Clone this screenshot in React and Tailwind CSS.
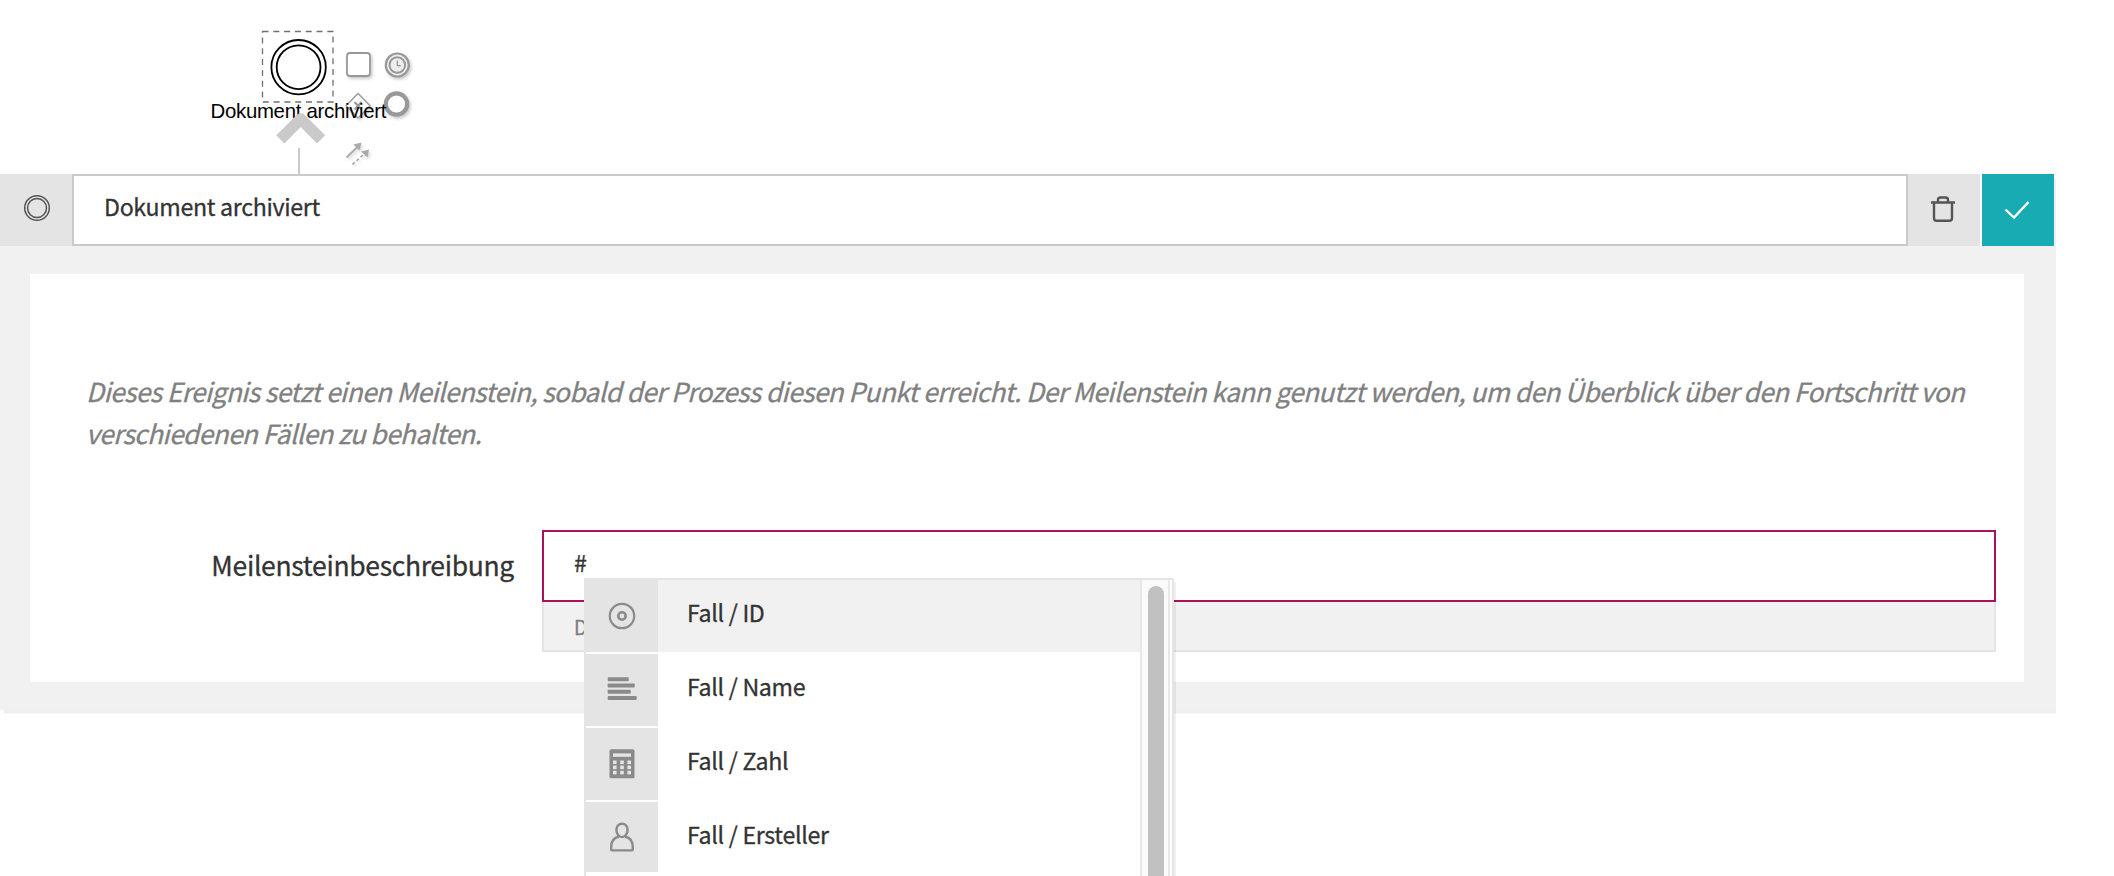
const SANS = "font-['Noto_Sans_CJK_SC','Source_Sans_Pro',sans-serif]";

const rows = [
  { label: "Fall / ID", icon: "disc" },
  { label: "Fall / Name", icon: "lines" },
  { label: "Fall / Zahl", icon: "calc" },
  { label: "Fall / Ersteller", icon: "user" },
];

function RowIcon({ name }) {
  if (name === "disc")
    return (
      <svg width="30" height="30" viewBox="0 0 30 30" fill="none" stroke="#8a8a8a" strokeWidth="2.2">
        <circle cx="15" cy="15" r="12.2" />
        <circle cx="15" cy="15" r="3.7" strokeWidth="2.6" />
      </svg>
    );
  if (name === "lines")
    return (
      <svg width="30" height="30" viewBox="0 0 30 30" fill="#8a8a8a" className="-mt-0.5">
        <rect x="0.7" y="3.3" width="21" height="4" rx="0.8" />
        <rect x="0.7" y="9.5" width="27" height="4" rx="0.8" />
        <rect x="0.7" y="15.7" width="23" height="4" rx="0.8" />
        <rect x="0.7" y="21.9" width="29" height="4" rx="0.8" />
      </svg>
    );
  if (name === "calc")
    return (
      <svg width="30" height="30" viewBox="0 0 30 30">
        <rect x="2.5" y="0.3" width="25" height="29" rx="1.6" fill="#8a8a8a" />
        <g fill="#e4e4e4">
          <rect x="6" y="4.4" width="18" height="3.4" />
          {[11.5, 16.6, 21.8].map((y) =>
            [6, 13.2, 20.4].map((x) => <rect key={x + "-" + y} x={x} y={y} width="3.6" height="3.6" />)
          )}
        </g>
      </svg>
    );
  return (
    <svg width="30" height="30" viewBox="0 0 30 30" fill="none" stroke="#8a8a8a" strokeWidth="2.4" className="-mt-0.5">
      <path d="M15 1.700c3.400 0 5.600 2.600 5.600 6.400 0 4-2.600 7-5.600 7s-5.600-3-5.600-7c0-3.800 2.200-6.400 5.600-6.400z" />
      <path d="M11.800 14.800C7 15.600 4.200 19.500 4.200 25.500v2c0 .6.3.9.900.9h19.800c.6 0 .9-.3.9-.9v-2c0-6-2.800-9.900-7.600-10.700" />
    </svg>
  );
}

function Canvas() {
  return (
    <svg className="block h-[174px] w-full" viewBox="0 0 2114 174" preserveAspectRatio="xMinYMin">
      <defs>
        <filter id="sh" x="-20%" y="-20%" width="140%" height="140%">
          <feGaussianBlur stdDeviation="0.6" result="soft" />
          <feDropShadow in="soft" dx="1.5" dy="2" stdDeviation="1.5" floodColor="#000" floodOpacity="0.35" />
        </filter>
      </defs>
      <rect x="262.500" y="31.500" width="70.500" height="70.500" fill="none" stroke="#707070" strokeWidth="1.300" strokeDasharray="6 4.800" />
      <circle cx="298.600" cy="67.200" r="27.200" fill="#fff" stroke="#000" strokeWidth="1.800" />
      <circle cx="298.600" cy="67.200" r="21.900" fill="#fff" stroke="#000" strokeWidth="1.800" />
      <g opacity="0.6" fill="none" stroke="#555" strokeWidth="1.800" filter="url(#sh)">
        <rect x="347" y="53" width="23" height="23" rx="3" fill="#fff" />
        <circle cx="397.300" cy="65" r="11.500" fill="#e4e4e4" strokeWidth="2.200" />
        <circle cx="397.300" cy="65" r="7.800" strokeWidth="2" />
        <path d="M397.300 60.500v5l3.500 .5" strokeWidth="1.300" />
        <path d="M358 93.500l12 12.200-12 12.200-12-12.200z" fill="#fff" strokeWidth="1.300" />
        <path d="M354.500 102l7 7.500M361.500 102l-7 7.500" strokeWidth="2" />
        <circle cx="396.500" cy="104" r="10.700" fill="#fff" strokeWidth="4.200" />
      </g>
      <g opacity="0.45" fill="none" stroke="#444" filter="url(#sh)">
        <path d="M346.500 157.500l11-10.500" strokeWidth="2" />
        <path d="M361.500 142.500l-2 8-6-6z" fill="#444" stroke="none" />
        <path d="M352.500 164.500l12-11" strokeWidth="1.700" strokeDasharray="3 2.500" />
        <path d="M369 149.500l-1.500 8-6.500-6z" fill="#444" stroke="none" />
      </g>
      <text x="210.500" y="117.700" fontFamily="Liberation Sans, Arial, sans-serif" fontSize="20.400" textLength="176" fill="#000">Dokument archiviert</text>
      <path d="M280.300 139.300L300.700 119L321.100 139.300" fill="none" stroke="#cacaca" strokeWidth="11.500" strokeLinejoin="round" />
      <path d="M299 148v26" stroke="#cacaca" strokeWidth="2" />
    </svg>
  );
}

const FIELD = "text-[23.2px] tracking-[-0.32px] [-webkit-text-stroke:0.3px_currentColor]";

export default function App() {
  return (
    <div className={`relative h-[876px] w-[2114px] overflow-hidden bg-white text-[#333] ${SANS}`}>
      <Canvas />
      <div className="w-[2056px]">
        <div className="flex h-[72px]">
          <div className="flex w-[72px] items-center justify-center bg-[#e4e4e4]">
            <svg width="28" height="28" viewBox="0 0 28 28" fill="none" stroke="#555" strokeWidth="1.500" className="-mt-1 ml-0.5">
              <circle cx="14" cy="14" r="12.300" />
              <circle cx="14" cy="14" r="9.500" />
            </svg>
          </div>
          <div className="flex w-[1836px] items-center border-2 border-[#cacaca] bg-white pb-2 pl-[30px]">
            <span className={FIELD}>Dokument archiviert</span>
          </div>
          <div className="flex w-[72px] items-center justify-center bg-[#e4e4e4]">
            <svg width="26" height="28" viewBox="0 0 26 28" fill="none" stroke="#555" strokeWidth="2.400" className="-ml-0.5 -mt-0.5">
              <path d="M1 7.500h24M4 7.500V23c0 1.800.9 2.700 2.700 2.700h12.600c1.800 0 2.700-.9 2.700-2.700V7.500M8 7V5c0-1.600.9-2.500 2.500-2.500h5C17.100 2.500 18 3.400 18 5v2" />
            </svg>
          </div>
          <div className="ml-0.5 flex w-[72px] items-center justify-center bg-[#18abb3]">
            <svg width="26" height="20" viewBox="0 0 26 20" fill="none" stroke="#fff" strokeWidth="2.400" className="-ml-0.5">
              <path d="M1.500 9.500l8.500 8L24.500 2" />
            </svg>
          </div>
          <div className="mt-1 w-0.5 bg-[#f1f1f1]" />
        </div>
        <div className="h-[464px] bg-[#f1f1f1] pl-[30px] pr-8 pt-7">
          <div className="h-[408px] bg-white pl-[56px] pr-7 pt-[96px]">
            <p className="h-[160px] whitespace-nowrap text-[26.2px] italic leading-[42px] tracking-[-0.56px] text-[#808080] [-webkit-text-stroke:0.3px_currentColor]">
              Dieses Ereignis setzt einen Meilenstein, sobald der Prozess diesen Punkt erreicht. Der Meilenstein kann genutzt werden, um den Überblick über den Fortschritt von
              <br />
              verschiedenen Fällen zu behalten.
            </p>
            <div className="flex">
              <div className="flex h-[72px] w-[456px] items-center justify-end pb-0.5 pr-[28px] text-[26.5px] tracking-[-0.32px] [-webkit-text-stroke:0.3px_currentColor]">
                <span>Meilensteinbeschreibung</span>
              </div>
              <div className="w-[1454px]">
                <div className="flex h-[72px] items-center border-2 border-[#a9115c] bg-white pb-2 pl-[30px]">
                  <span className={FIELD}>#</span>
                </div>
                <div className="flex h-[50px] items-center border-2 border-t-0 border-[#e4e4e4] bg-[#f1f1f1] pl-[30px] pt-0.5 text-[19.5px] text-[#808080] [-webkit-text-stroke:0.3px_currentColor]">D</div>
              </div>
            </div>
          </div>
        </div>
        <div className="ml-1 h-1 border-b border-[#f8f8f8] bg-[#efefef]" />
      </div>

      <div className="absolute left-[584px] top-[578px] flex h-[298px] w-[590px] border-2 border-b-0 border-[#e4e4e4] bg-white shadow-[2px_4px_0_rgba(0,0,0,0.06)]">
        <div className="flex h-[292px] w-[554px] flex-col gap-0.5 overflow-hidden">
          {rows.map((r, i) => (
            <div key={r.label} className={`flex h-[72px] shrink-0 ${i === 0 ? "bg-[#f1f1f1]" : "bg-white"}`}>
              <div className="flex w-[72px] items-center justify-center bg-[#e4e4e4]">
                <RowIcon name={r.icon} />
              </div>
              <div className="flex items-center pb-2 pl-[29px]">
                <span className={FIELD}>{r.label}</span>
              </div>
            </div>
          ))}
        </div>
        <div className="h-[296px] w-[30px] border-x-2 border-[#e8e8e8] bg-[#fafafa] pl-1.5 pt-1.5">
          <div className="h-[310px] w-4 rounded-full bg-[#c1c1c1]" />
        </div>
      </div>
    </div>
  );
}
